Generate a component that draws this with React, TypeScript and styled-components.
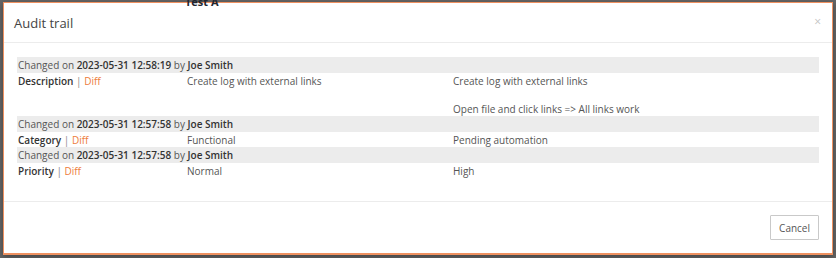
import styled, { createGlobalStyle } from "styled-components";

const GlobalStyle = createGlobalStyle`
    html, body {
        margin: 0;
        padding: 0;
        background: #656565;
        font-family: "Open Sans", "Liberation Sans", sans-serif;
    }
`;

const Backdrop = styled.div`
    position: relative;
    width: 836px;
    height: 258px;
    background: #656565;
    overflow: hidden;
    padding: 2px 3px 0 3px;
    box-sizing: border-box;
`;

const PageBehind = styled.span`
    position: absolute;
    top: -6px;
    left: 185px;
    font-size: 11px;
    font-weight: 700;
    color: #1f2630;
`;

const Modal = styled.div`
    width: 830px;
    height: 253px;
    box-sizing: border-box;
    background: #ffffff;
    border: 1px solid #ef9160;
    border-bottom-width: 2px;
    display: flex;
    flex-direction: column;
    box-shadow: 0 2px 6px rgba(0, 0, 0, 0.35);
`;

const Header = styled.div`
    height: 40px;
    box-sizing: border-box;
    padding: 0 10px;
    display: flex;
    align-items: center;
    justify-content: space-between;
    border-bottom: 1px solid #ececec;
`;

const Title = styled.h4`
    margin: 0;
    font-size: 13px;
    font-weight: 400;
    color: #444;
`;

const Close = styled.span`
    font-size: 12px;
    color: #c4c4c4;
    margin-right: 1px;
    margin-top: -3px;
`;

const Body = styled.div`
    flex: 1;
    padding: 14px 13px 0 13px;
    border-bottom: 1px solid #ececec;
`;

const Grid = styled.div`
    display: grid;
    grid-template-columns: 169px 266px 1fr;
    font-size: 10px;
    color: #555;
`;

const ChangeBar = styled.div`
    grid-column: 1 / -1;
    background: #ececec;
    padding: 1px 1px 0.5px;
    line-height: 14px;
`;

const Cell = styled.div`
    padding: 1px 1px 0.5px;
    line-height: 14px;
    white-space: pre-line;
`;

const Strong = styled.b`
    font-weight: 600;
    color: #333;
`;

const Sep = styled.span`
    color: #888;
`;

const DiffLink = styled.a`
    color: #ee7d3b;
    text-decoration: none;
`;

const Footer = styled.div`
    height: 51px;
    display: flex;
    align-items: center;
    justify-content: flex-end;
    padding: 0 13px 0;
`;

const Button = styled.button`
    height: 25px;
    padding: 0 8px;
    font-family: inherit;
    font-size: 10px;
    color: #555;
    background: #fff;
    border: 1px solid #c9c9c9;
    border-radius: 1px;
`;

const entries = [
    {
        when: "2023-05-31 12:58:19",
        who: "Joe Smith",
        field: "Description",
        from: "Create log with external links",
        to: "Create log with external links\n\nOpen file and click links => All links work",
    },
    {
        when: "2023-05-31 12:57:58",
        who: "Joe Smith",
        field: "Category",
        from: "Functional",
        to: "Pending automation",
    },
    {
        when: "2023-05-31 12:57:58",
        who: "Joe Smith",
        field: "Priority",
        from: "Normal",
        to: "High",
    },
];

function App() {
    return (
        <>
            <GlobalStyle />
            <Backdrop>
                <PageBehind>Test A</PageBehind>
                <Modal>
                    <Header>
                        <Title>Audit trail</Title>
                        <Close>×</Close>
                    </Header>
                    <Body>
                        <Grid>
                            {entries.map((e, i) => (
                                <>
                                    <ChangeBar key={`c${i}`}>
                                        Changed on <Strong>{e.when}</Strong> by <Strong>{e.who}</Strong>
                                    </ChangeBar>
                                    <Cell key={`f${i}`}>
                                        <Strong>{e.field}</Strong> <Sep>|</Sep> <DiffLink href="#">Diff</DiffLink>
                                    </Cell>
                                    <Cell key={`a${i}`}>{e.from}</Cell>
                                    <Cell key={`b${i}`}>{e.to}</Cell>
                                </>
                            ))}
                        </Grid>
                    </Body>
                    <Footer>
                        <Button>Cancel</Button>
                    </Footer>
                </Modal>
            </Backdrop>
        </>
    );
}

export default App;
